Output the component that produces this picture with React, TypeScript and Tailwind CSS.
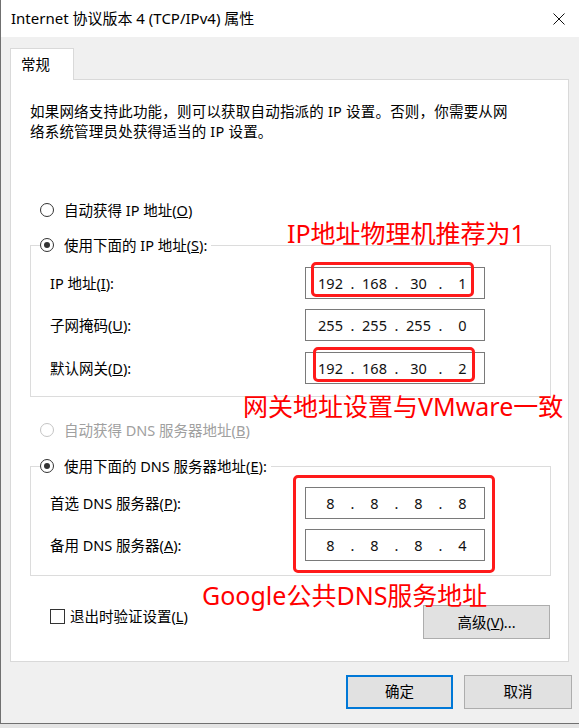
import React from "react";

const ui = "font-[family-name:'Noto_Sans','Noto_Sans_CJK_SC',sans-serif]";

const Radio = ({ checked, disabled }: { checked?: boolean; disabled?: boolean }) => (
  <span
    className={`w-[14px] h-[14px] shrink-0 rounded-full border bg-white flex items-center justify-center ${
      disabled ? "border-[#c4c4c4]" : "border-[#333333]"
    }`}
  >
    {checked && <span className="w-[6px] h-[6px] rounded-full bg-[#333333]" />}
  </span>
);

const IpField = ({ parts }: { parts: string[] }) => (
  <div className="w-[180px] h-[32px] border border-[#7a7a7a] bg-white flex items-center pl-[6px] text-[14.5px] text-[#111]">
    {parts.map((p, i) => (
      <React.Fragment key={i}>
        <span className="w-[37px] text-center">{p}</span>
        {i < 3 && <span className="w-[7px] text-center">.</span>}
      </React.Fragment>
    ))}
  </div>
);

const Row = ({ label, k, rest, parts, className }: { label: string; k: string; rest: string; parts: string[]; className?: string }) => (
  <div className={`flex items-center justify-between pl-[19px] pr-[65px] ${className ?? ""}`}>
    <span>
      {label}(<u>{k}</u>){rest}
    </span>
    <IpField parts={parts} />
  </div>
);

const Legend = ({ children }: { children: React.ReactNode }) => (
  <div className="-mt-[11px] ml-[9px] pr-[4px] h-[20px] w-fit bg-white flex items-center gap-[10px]">
    <Radio checked />
    <span>{children}</span>
  </div>
);

const App = () => {
  return (
    <div className={`relative w-[579px] h-[728px] overflow-hidden bg-[#e4e4e4] ${ui} text-black`}>
      <div className="h-[724px] bg-[#f0f0f0] border-l border-b border-[#707070]">
        {/* title bar */}
        <div className="h-[37px] bg-white flex items-center justify-between pl-[10px] pr-[14px] text-[15px]">
          <span>Internet 协议版本 4 (TCP/IPv4) 属性</span>
          <svg width="12" height="12" viewBox="0 0 12 12">
            <path d="M0.5 0.5L11.5 11.5M11.5 0.5L0.5 11.5" stroke="#111" strokeWidth="1" />
          </svg>
        </div>

        {/* tab */}
        <div className="mt-[11px] ml-[9px] relative z-10 -mb-px w-[64px] h-[32px] bg-white border border-b-0 border-[#d9d9d9] pl-[10px] pt-[5px] text-[14.5px] leading-[20px]">
          常规
        </div>

        {/* panel */}
        <div className="ml-[9px] w-[559px] bg-white border border-[#d9d9d9] pl-[19px] pr-[17px] pb-[22px] text-[14.5px] leading-[20px]">
          <p className="mt-[21px] tracking-[0.2px]">
            如果网络支持此功能，则可以获取自动指派的 IP 设置。否则，你需要从网
            <br />
            络系统管理员处获得适当的 IP 设置。
          </p>

          <div className="mt-[59px] h-[20px] pl-[10px] flex items-center gap-[10px]">
            <Radio />
            <span>
              自动获得 IP 地址(<u>O</u>)
            </span>
          </div>

          <div className="mt-[25px] border border-[#dcdcdc] pb-[12px]">
            <Legend>
              使用下面的 IP 地址(<u>S</u>):
            </Legend>
            <Row className="mt-[12px]" label="IP 地址" k="I" rest=":" parts={["192", "168", "30", "1"]} />
            <Row className="mt-[10px]" label="子网掩码" k="U" rest=":" parts={["255", "255", "255", "0"]} />
            <Row className="mt-[11px]" label="默认网关" k="D" rest=":" parts={["192", "168", "30", "2"]} />
          </div>

          <div className="mt-[23px] h-[20px] pl-[10px] flex items-center gap-[10px] text-[#a0a0a0]">
            <Radio disabled />
            <span>
              自动获得 DNS 服务器地址(<u>B</u>)
            </span>
          </div>

          <div className="mt-[26px] border border-[#dcdcdc] pb-[14px]">
            <Legend>
              使用下面的 DNS 服务器地址(<u>E</u>):
            </Legend>
            <Row className="mt-[11px]" label="首选 DNS 服务器" k="P" rest=":" parts={["8", "8", "8", "8"]} />
            <Row className="mt-[10px]" label="备用 DNS 服务器" k="A" rest=":" parts={["8", "8", "8", "4"]} />
          </div>

          <div className="mt-[29px] flex items-start justify-between">
            <label className="mt-px ml-[20px] h-[20px] flex items-center gap-[5px]">
              <span className="w-[15px] h-[15px] border border-[#333333] bg-white" />
              <span>
                退出时验证设置(<u>L</u>)
              </span>
            </label>
            <button className="mr-px w-[127px] h-[34px] bg-[#e1e1e1] border border-[#adadad]">
              高级(<u>V</u>)...
            </button>
          </div>
        </div>

        {/* bottom buttons */}
        <div className="mt-[13px] pr-[7px] flex justify-end gap-[11px] text-[14.5px]">
          <button className="w-[107px] h-[34px] bg-[#e1e1e1] border-2 border-[#0078d7]">确定</button>
          <button className="w-[108px] h-[34px] bg-[#e1e1e1] border border-[#adadad]">取消</button>
        </div>
      </div>

      {/* red annotations */}
      <div className="absolute left-[287px] top-[221px] text-[25px] leading-none text-[#ff0000] whitespace-nowrap">
        IP地址物理机推荐为1
      </div>
      <div className="absolute left-[243px] top-[394px] text-[25px] leading-none text-[#ff0000] whitespace-nowrap">
        网关地址设置与VMware一致
      </div>
      <div className="absolute left-[202px] top-[583px] text-[25px] leading-none text-[#ff0000] whitespace-nowrap">
        Google公共DNS服务地址
      </div>
      <div className="absolute left-[311px] top-[262px] w-[163px] h-[35px] border-[3px] border-[#ff1a1a] rounded-[5px]" />
      <div className="absolute left-[313px] top-[347px] w-[162px] h-[35px] border-[3px] border-[#ff1a1a] rounded-[5px]" />
      <div className="absolute left-[293px] top-[475px] w-[202px] h-[98px] border-[3px] border-[#ff1a1a] rounded-[5px]" />
    </div>
  );
};

export default App;
